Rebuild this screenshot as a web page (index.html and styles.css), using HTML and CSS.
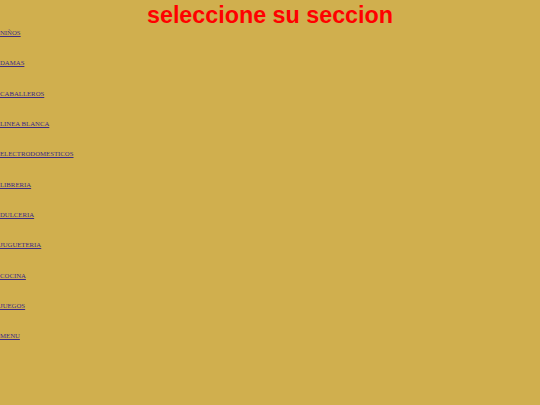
FILE: index.html
```html
<!DOCTYPE html>
<html>
<head>
<meta charset="utf-8">
<link rel="stylesheet" href="styles.css">
</head>
<body>
<h1 class="title">seleccione su seccion</h1>
<nav class="menu">
<a class="item" href="#">NIÑOS</a>
<a class="item" href="#">DAMAS</a>
<a class="item" href="#">CABALLEROS</a>
<a class="item" href="#">LINEA BLANCA</a>
<a class="item" href="#">ELECTRODOMESTICOS</a>
<a class="item" href="#">LIBRERIA</a>
<a class="item" href="#">DULCERIA</a>
<a class="item" href="#">JUGUETERIA</a>
<a class="item" href="#">COCINA</a>
<a class="item" href="#">JUEGOS</a>
<a class="item" href="#">MENU</a>
</nav>
</body>
</html>
```
FILE: styles.css
```css
html, body {
  margin: 0;
  padding: 0;
  background: #d0af4e;
}
body {
  width: 540px;
  height: 405px;
  overflow: hidden;
}
.title {
  margin: 0;
  padding-top: 3px;
  font-family: "Liberation Sans", Arial, sans-serif;
  font-weight: bold;
  font-size: 23.3px;
  line-height: 25px;
  color: #ff0000;
  text-align: center;
}
.menu {
  display: flex;
  flex-direction: column;
  align-items: flex-start;
  gap: 20.33px;
}
.item {
  display: block;
  font-family: "Liberation Serif", "Times New Roman", serif;
  font-size: 6.75px;
  line-height: 10px;
  color: #3b2a86;
  text-decoration: underline;
}
```
